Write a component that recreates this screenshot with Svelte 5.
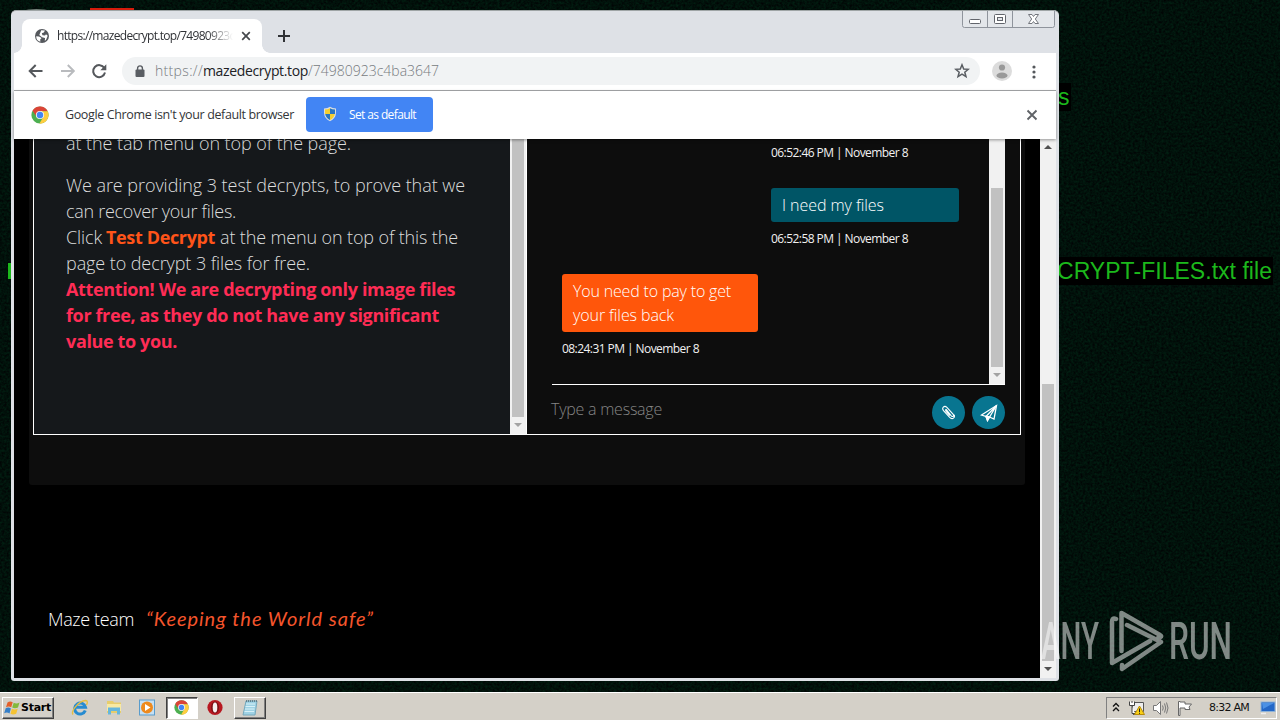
<script>
  const url = { scheme: 'https://', host: 'mazedecrypt.top', path: '/74980923c4ba3647' };

  // Spreads letter spacing so a run of text fills the given width.
  function fit(node, width) {
    const n = node.textContent.length;
    const natural = node.getBoundingClientRect().width;
    node.style.letterSpacing = `${(width - natural) / n}px`;
  }
</script>

{#snippet chromeLogo()}
  <svg viewBox="0 0 18 18" class="chrome-logo">
    <circle cx="9" cy="9" r="8.6" fill="#4caf50" />
    <path d="M1.5 4.8A8.6 8.6 0 0 1 16.7 5.2L9 5.2 5.8 11z" fill="#db4437" />
    <path d="M16.7 5.2A8.6 8.6 0 0 1 8.4 17.6L12.4 11 9 5.2z" fill="#ffcd40" />
    <circle cx="9" cy="9" r="4.1" fill="#f4f4f4" />
    <circle cx="9" cy="9" r="3.2" fill="#4285f4" />
  </svg>
{/snippet}

<div class="desktop">
  <svg class="noise" width="1280" height="720">
    <filter id="grain" x="0" y="0" width="100%" height="100%" color-interpolation-filters="sRGB">
      <feTurbulence type="fractalNoise" baseFrequency="0.42" numOctaves="2" seed="4" />
      <feColorMatrix values="0 0 0 0 0.005  0 .16 0 0 -.012  0 .08 0 0 .002  0 0 0 0 1" />
    </filter>
    <rect width="1280" height="720" filter="url(#grain)" />
  </svg>

  <span class="wall letter-s">s</span>
  <span class="wall file-name"><span use:fit={215}>CRYPT-FILES.txt file</span></span>
  <i class="wall-edge green"></i>
  <i class="wall-edge red"></i>
  <i class="wall-edge grey"></i>

  <div class="window">
    <div class="tabstrip">
      <div class="tab">
        <svg width="16" height="16" viewBox="0 0 16 16">
          <circle cx="8" cy="8" r="7" fill="#55585d" />
          <path d="M2.2 8.2 5 8.6 7.6 10.1 6.2 11.6 6.4 13.8C3.7 13.2 2.1 11 2.2 8.2zM7.2 2.3 11 2.6 9.8 4.6 7.8 5.3 8.5 7.3 11 7.6 12 6.2 13.7 7.7 12.2 11.6 10.8 13 11 10 8 9.2 5.3 6.9z" fill="#fff" />
        </svg>
        <div class="tab-title"><span use:fit={221}>{url.scheme}{url.host}{url.path}</span></div>
        <svg class="tab-x" width="10" height="10" viewBox="0 0 10 10"><path d="M1.2 1.2 8.8 8.8M8.8 1.2 1.2 8.8" stroke="#45484c" stroke-width="1.7" /></svg>
      </div>
      <svg class="plus" width="12" height="12" viewBox="0 0 12 12"><path d="M6 0V12M0 6H12" stroke="#303236" stroke-width="2" /></svg>
      <svg class="controls" width="94" height="18" viewBox="0 0 94 18">
        <path d="M.5 0V14.5Q.5 16.5 2.5 16.5H90.5Q92.5 16.5 92.5 14.5V0M25.5 0V16M50.5 0V16" fill="#e3e6ea" stroke="#8f949c" />
        <rect x="7.5" y="8.5" width="11" height="4" rx="1" fill="#fff" stroke="#62656c" />
        <rect x="32.5" y="3.500" width="11" height="9" rx="1" fill="#fff" stroke="#62656c" />
        <rect x="35.500" y="6.500" width="5" height="3" fill="#e3e6ea" stroke="#62656c" />
        <path d="M66.500 3.500h3.500l1.500 2 1.500-2h3.500l-3.200 4.500 3.200 4.500h-3.500l-1.500-2-1.500 2h-3.500l3.200-4.500z" fill="#fff" stroke="#73767d" />
      </svg>
    </div>

    <div class="toolbar">
      <svg class="nav" width="90" height="20" viewBox="0 0 90 20" fill="none">
        <path d="M15.500 10H3M8.700 4 2.700 10 8.700 16" stroke="#55585c" stroke-width="2" />
        <path d="M34 10H46.500M40.800 4 46.800 10 40.800 16" stroke="#b9bbbe" stroke-width="2" />
        <path d="M77.300 7A6 6 0 1 0 78 11.500" stroke="#55585c" stroke-width="2" />
        <path d="M79.300 3.300V9.300H73.300z" fill="#55585c" />
      </svg>
      <div class="omnibox">
        <svg width="10" height="13" viewBox="0 0 10 13"><rect x=".5" y="4.500" width="9" height="7.500" rx="1" fill="#5a5e63" /><path d="M2.600 5V3.300a2.400 2.400 0 0 1 4.800 0V5" fill="none" stroke="#5a5e63" stroke-width="1.400" /></svg>
        <div class="address"><span class="dim" use:fit={48}>{url.scheme}</span><span use:fit={105}>{url.host}</span><span class="dim" use:fit={131}>{url.path}</span></div>
        <svg class="star" width="16" height="16" viewBox="0 0 16 16"><path d="M8 1.800 9.700 6 14.300 6.300 10.800 9.200 12 13.700 8 11.200 4 13.700 5.200 9.200 1.700 6.300 6.300 6z" fill="none" stroke="#5a5e63" stroke-width="1.500" /></svg>
      </div>
      <svg class="avatar" width="20" height="20" viewBox="0 0 20 20"><circle cx="10" cy="10" r="10" fill="#dcdcdc" /><circle cx="10" cy="6.500" r="3.100" fill="#999" /><ellipse cx="10" cy="14.500" rx="5.500" ry="3" fill="#999" /></svg>
      <svg class="dots" width="4" height="14" viewBox="0 0 4 14" fill="#55585c"><circle cx="2" cy="2" r="1.600" /><circle cx="2" cy="7" r="1.600" /><circle cx="2" cy="12" r="1.600" /></svg>
    </div>

    <div class="infobar">
      {@render chromeLogo()}
      <span class="info-text"><span use:fit={229}>Google Chrome isn't your default browser</span></span>
      <button class="default-btn">
        <svg width="14" height="16" viewBox="0 0 14 16">
          <path d="M7 .7Q4.500 2.500 1 2.500V7Q1.300 12.500 7 15.300 12.700 12.500 13 7V2.500Q9.500 2.500 7 .7z" fill="#d8dde0" />
          <path d="M7 2.200V8H12V3.500Q9 3.400 7 2.200zM7 8H2.200Q3 12 7 14z" fill="#2876c4" />
          <path d="M7 2.200V8H2V3.500Q5 3.400 7 2.200zM7 8H11.800Q11 12 7 14z" fill="#f4cf30" />
        </svg>
        <span use:fit={67}>Set as default</span>
      </button>
      <svg class="info-x" width="12" height="12" viewBox="0 0 12 12"><path d="M1.500 1.500 10.500 10.500M10.500 1.500 1.500 10.500" stroke="#606367" stroke-width="1.900" /></svg>
    </div>

    <div class="viewport">
      <div class="page">
        <main>
          <div class="panel">
            <section class="info">
              <div class="copy">
                <p><span use:fit={285}>at the tab menu on top of the page.</span></p>
                <p>
                  <span use:fit={399}>We are providing 3 test decrypts, to prove that we</span><br />
                  <span use:fit={170}>can recover your files.</span><br />
                  <span use:fit={36}>Click</span><b class="orange" use:fit={109}>Test Decrypt</b><span use:fit={238}>at the menu on top of this the</span><br />
                  <span use:fit={244}>page to decrypt 3 files for free.</span><br />
                  <b class="pink"><span use:fit={389}>Attention! We are decrypting only image files</span><br />
                    <span use:fit={373}>for free, as they do not have any significant</span><br />
                    <span use:fit={111}>value to you.</span></b>
                </p>
              </div>
              <div class="scroll"><i class="thumb"></i><i class="arrow down pale"></i></div>
            </section>
            <section class="chat">
              <div class="log">
                <div class="messages">
                  <div class="mine first"><time><span use:fit={137}>06:52:46 PM | November 8</span></time></div>
                  <div class="mine">
                    <div class="bubble teal"><span use:fit={102}>I need my files</span></div>
                    <time><span use:fit={137}>06:52:58 PM | November 8</span></time>
                  </div>
                  <div class="theirs">
                    <div class="bubble fire"><span use:fit={158}>You need to pay to get</span><br /><span use:fit={101}>your files back</span></div>
                    <time><span use:fit={137}>08:24:31 PM | November 8</span></time>
                  </div>
                </div>
                <div class="scroll"><i class="gap"></i><i class="thumb"></i><i class="arrow down pale"></i></div>
              </div>
              <div class="composer">
                <div class="placeholder"><span use:fit={111}>Type a message</span></div>
                <div class="round">
                  <svg width="15" height="15" viewBox="0 0 16 16" fill="none" stroke="#fff" stroke-width="1.200"><path d="M5.200 4.500 11 11.500Q12.200 12.700 13 12 13.800 11.200 12.800 9.800L6.300 2.500Q4.200.7 2.500 2.200 1 3.800 2.700 6L9 13Q11.300 15.300 13.300 14 15 12.500 14 10.500M5.200 4.500Q4.500 5.500 5.500 6.800L9.500 11.200" /></svg>
                </div>
                <div class="round">
                  <svg width="18" height="18" viewBox="0 0 18 18" fill="none" stroke="#fff" stroke-width="1.300"><path d="M1.500 11 16.500 1.500 14 15 9.500 13 7.500 16.500 6 12.500z" /><path d="M6 12.500 16.500 1.500 9.500 13z" fill="#087590" /><path d="M6 12.500 9.500 13 7.500 16.500z" fill="#fff" /></svg>
                </div>
              </div>
            </section>
          </div>
        </main>
        <footer><span use:fit={86}>Maze team</span><em><span use:fit={228}>“Keeping the World safe”</span></em></footer>
      </div>
      <div class="scroll main-scroll"><i class="arrow up"></i><i class="gap"></i><i class="thumb"></i><i class="arrow down"></i></div>
    </div>
  </div>

  <svg class="watermark" width="200" height="70" viewBox="0 0 200 70">
    <g fill="#fff">
      <text x="2" y="50" textLength="58" lengthAdjust="spacingAndGlyphs">ANY</text>
      <text x="130" y="50" textLength="63" lengthAdjust="spacingAndGlyphs">RUN</text>
    </g>
    <g fill="none" stroke="#fff" stroke-width="4.500" stroke-linejoin="round" stroke-linecap="round">
      <path d="M77 10Q73 8 73 13V54L111 32M82.500 42V4L121 26Q124 28 119 29M88 16 122 33 83 60V56" />
    </g>
  </svg>

  <div class="taskbar">
    <div class="start">
      <svg width="17" height="16" viewBox="0 0 17 16">
        <path d="M3.500 2.500Q6 .7 8.700 2.300L7.200 7.200Q4.700 5.700 2 7.200z" fill="#e4602b" />
        <path d="M9.700 2.700Q12.500 4.200 15.500 2.500L14 7.500Q11 9 8.200 7.600z" fill="#83b93b" />
        <path d="M1.700 8.300Q4.300 6.900 6.900 8.400L5.500 13.400Q3 11.900.2 13.300z" fill="#367fc8" />
        <path d="M7.900 8.700Q10.600 10.200 13.700 8.700L12.200 13.700Q9.200 15.200 6.500 13.800z" fill="#f5c333" />
      </svg>
      <b use:fit={30}>Start</b>
    </div>
    <div class="pins">
      <svg width="18" height="17" viewBox="0 0 18 17"><path d="M14.300 11.500A5.500 5.500 0 1 1 14.500 8.300H5" fill="none" stroke="#278bd0" stroke-width="3" /><path d="M2 15.500C-.5 12 8 2 14.500 1.500 17 1.500 16.500 4 15.500 6" fill="none" stroke="#e5be43" stroke-width="1.400" /></svg>
      <svg width="18" height="17" viewBox="0 0 18 17"><path d="M2 2H8L9 3.500H16V14H2z" fill="#e7cd6c" /><path d="M2 5H16V12H2z" fill="#f8e9a2" /><path d="M3 8.500H15V15.500H12V12H6V15.500H3z" fill="#66b6dc" /></svg>
      <svg width="18" height="17" viewBox="0 0 18 17"><rect x="1.500" y="1" width="15" height="15" fill="#c6e0f3" stroke="#599ccc" /><circle cx="9" cy="8.500" r="6" fill="#ee8a1d" /><path d="M7 5 12.500 8.500 7 12z" fill="#fff" /></svg>
      <div class="task active">{@render chromeLogo()}</div>
      <svg width="16" height="17" viewBox="0 0 16 17"><circle cx="8" cy="8.500" r="7.600" fill="#b81820" /><ellipse cx="8" cy="8.500" rx="4" ry="6" fill="#7d0e14" /><ellipse cx="8" cy="8.500" rx="2.300" ry="5" fill="#f5eded" /></svg>
      <div class="task">
        <svg width="18" height="18" viewBox="0 0 18 18"><path d="M5 2H16L14 16H2z" fill="#9fd2e4" stroke="#76a9bd" /><path d="M5 5H14M4.500 7.500H14M4 10H13.500M3.500 12.500H13" stroke="#d8f1f7" /><path d="M5 2H16" stroke="#566f79" stroke-width="1.500" stroke-dasharray="1 1" /></svg>
      </div>
    </div>
    <div class="tray">
      <svg width="8" height="11" viewBox="0 0 8 11" fill="none" stroke="#111" stroke-width="1.300"><path d="M1 4.500 4 1.500 7 4.500M1 9 4 6 7 9" /></svg>
      <svg class="network" width="17" height="16" viewBox="0 0 17 16"><path d="M4.500 2.500H15.500V11.500H4.500zM5 14.500H13" fill="#eee" stroke="#555" /><path d="M1.500 1.500V5.500H6.500V1.500M4 1V3M4 6V13.500H7" fill="#fff" stroke="#444" /><path d="M11.500 6 16.500 14.500H6.500z" fill="#f8cf16" stroke="#b78b0c" /><path d="M11.500 8.500V12M11.500 12.800V13.800" stroke="#222" /></svg>
      <svg class="speaker" width="17" height="16" viewBox="0 0 17 16" fill="none" stroke="#777"><path d="M1.500 5.500H4.500L8.500 1.500V14.500L4.500 10.500H1.500z" fill="#fff" /><path d="M10.500 5.500Q12 8 10.500 10.500M12.500 3.500Q15 8 12.500 12.500M14.500 2.500Q17.500 8 14.500 13.500" /></svg>
      <svg class="flag" width="16" height="16" viewBox="0 0 16 16"><path d="M1.500 15.500V1.500H3V2H8V4H14.500L12 7 13 9.500H8V8H3V15.500z" fill="#fff" stroke="#666" /></svg>
      <span class="clock"><span use:fit={40}>8:32 AM</span></span>
      <svg class="screen" width="16" height="14" viewBox="0 0 16 14"><rect x="1" y="1" width="14" height="9.500" fill="#2367c7" stroke="#8fb3d8" /><path d="M2 2H14L3 8z" fill="#4b91e5" /><path d="M1 12.500H6" stroke="#eee" stroke-width="1.500" /></svg>
    </div>
  </div>
</div>

<style>
  :global(body) { margin: 0; overflow: hidden; }
  * { box-sizing: border-box; }
  svg { display: block; flex: none; }
  .desktop { position: relative; width: 1280px; height: 720px; overflow: hidden; background: #02110b; font-family: "Open Sans", "Noto Sans", sans-serif; display: flex; flex-direction: column; justify-content: flex-end; }
  span, b, em { white-space: nowrap; }
  .noise { position: absolute; inset: 0; }
  .wall { position: absolute; background: #000; color: #1cb81c; font: 23px/28px "Liberation Sans", sans-serif; }
  .letter-s { left: 1058px; top: 83px; padding-right: 1px; }
  .file-name { left: 1057px; top: 257px; padding-right: 1px; }
  .wall-edge { position: absolute; }
  .green { left: 8px; top: 263px; width: 3px; height: 16px; background: #1cb81c; }
  .red { left: 90px; top: 8px; width: 44px; height: 4px; background: #d51b0b; }
  .grey { left: 25px; top: 9px; width: 23px; height: 3px; background: #74807a; border-radius: 50%; }

  .window { position: absolute; left: 11px; top: 10px; width: 1048px; height: 671px; padding: 1px 3px 3px; background: #dee1e6; border-radius: 5px 5px 3px 3px; border-top: 1px solid #9fa5a6; display: flex; flex-direction: column; overflow: hidden; }
  .window > * { flex: none; }
  .tabstrip { height: 41px; display: flex; align-items: flex-end; }
  .tab { position: relative; width: 240px; height: 34px; margin-left: 8px; padding: 0 0 0 12px; background: #fff; border-radius: 8px 8px 0 0; display: flex; align-items: center; }
  .tab::before, .tab::after { content: ""; position: absolute; bottom: 0; width: 8px; height: 8px; }
  .tab::before { left: -8px; background: radial-gradient(circle at 0 0, transparent 7.500px, #fff 8px); }
  .tab::after { right: -8px; background: radial-gradient(circle at 100% 0, transparent 7.500px, #fff 8px); }
  .tab-title { width: 176px; margin-left: 7px; overflow: hidden; font-size: 12px; line-height: 18px; color: #303236; -webkit-mask-image: linear-gradient(90deg, #000 150px, transparent 176px); mask-image: linear-gradient(90deg, #000 150px, transparent 176px); }
  .tab-x { margin-left: 8px; }
  .plus { margin: 0 0 11px 16px; }
  .controls { align-self: flex-start; margin: -1px 0 0 auto; }
  .toolbar { height: 38px; background: #fff; display: flex; align-items: center; border-bottom: 1px solid #a9abad; }
  .nav { margin: -1px 0 0 13px; }
  .omnibox { width: 858px; height: 28px; margin: -1px 0 0 5px; padding: 0 10px 0 13px; border-radius: 14px; background: #f1f3f4; display: flex; align-items: center; }
  .address { margin-left: 10px; display: flex; font-size: 14px; line-height: 20px; color: #202124; }
  .dim { color: #777b80; font-weight: 300; }
  .star { margin-left: auto; }
  .avatar { margin: -1px 0 0 12px; }
  .dots { margin-left: 20px; }
  .infobar { position: relative; z-index: 1; height: 48px; padding-left: 17px; background: #fff; display: flex; align-items: center; box-shadow: 0 1px 3px #0006; }
  .chrome-logo { width: 18px; height: 18px; }
  .info-text { margin: -1px 0 0 16px; width: 241px; font-size: 12.500px; color: #333538; }
  .default-btn { width: 127px; height: 35px; margin-top: -2px; padding: 0 0 0 17px; border: 0; border-radius: 4px; background: #4285f4; color: #fff; font: 12px "Open Sans", sans-serif; display: flex; align-items: center; gap: 12px; }
  .info-x { margin-left: auto; margin-right: 18px; }

  .viewport { height: 539px; display: flex; background: #000; overflow: hidden; }
  .page { width: 1026px; height: 539px; }
  main { width: 996px; height: 346px; margin-left: 15px; padding-left: 4px; background: #0d0d0d; border-radius: 0 0 3px 3px; }
  .panel { width: 988px; height: 296px; border: 1px solid #fff; border-top: 0; display: flex; }
  .info { width: 493px; display: flex; justify-content: space-between; background: #15181b; border-right: 1px solid #fff; }
  .copy { padding-left: 32px; font-size: 18px; line-height: 26px; font-weight: 300; color: #dcdddd; }
  .copy p { margin: 0 0 16px; }
  .copy p:first-child { margin-top: -9px; }
  .orange { color: #ff5419; margin: 0 5px 0 4px; font-weight: 700; }
  .pink { color: #ff2c55; font-weight: 700; }
  .scroll { width: 16px; flex: none; background: #f1f1f1; display: flex; flex-direction: column; align-items: center; }
  .thumb { width: 12px; flex: 1; background: #c1c1c1; }
  .arrow { position: relative; width: 16px; height: 17px; flex: none; }
  .arrow::after { content: ""; position: absolute; left: 4px; top: 6px; border: 4px solid transparent; }
  .down::after { border-top-color: #505050; border-bottom: 0; }
  .up::after { border-bottom-color: #505050; border-top: 0; }
  .pale::after { border-top-color: #a3a3a3; }
  .chat { flex: 1; padding: 0 15px 0 25px; display: flex; flex-direction: column; }
  .log { height: 246px; border-bottom: 1px solid #fff; display: flex; justify-content: space-between; margin-right: 0; }
  .log .gap { height: 49px; }
  .messages { flex: 1; padding-left: 10px; display: flex; flex-direction: column; align-items: flex-start; }
  time { display: block; font-size: 12px; line-height: 16px; color: #f2f2f2; }
  .mine { margin-left: 209px; margin-bottom: 27px; }
  .first { padding-top: 6px; }
  .bubble { border-radius: 3px; padding: 5px 11px; font-size: 16px; line-height: 24px; color: #fff; font-weight: 300; margin-bottom: 9px; }
  .teal { width: 188px; height: 34px; background: #005566; }
  .fire { width: 196px; height: 58px; background: #ff560b; }
  .composer { flex: 1; display: flex; align-items: center; gap: 7px; padding-top: 6px; }
  .placeholder { flex: 1; font-size: 16px; font-weight: 300; line-height: 24px; margin: -7px 0 0 -1px; color: #858585; }
  .round { width: 33px; height: 33px; border-radius: 50%; background: #087590; display: flex; align-items: center; justify-content: center; }
  footer { margin: 119px 0 0 34px; display: flex; align-items: baseline; gap: 12px; font: 300 18px/28px "Open Sans", sans-serif; color: #fff; }
  em { color: #f5552c; font: italic 20px/28px Lato, sans-serif; }
  .main-scroll .gap { height: 228px; }

  .watermark { position: absolute; left: 1039px; top: 609px; opacity: .5; overflow: visible; font: 500 52px Roboto, sans-serif; }

  .taskbar { position: relative; height: 28px; padding: 3px 2px 1px; border-top: 1px solid #fff; background: #d4d0c8; display: flex; align-items: center; font-family: "DejaVu Sans", sans-serif; }
  .start { width: 52px; height: 22px; display: flex; align-items: center; gap: 0; border: 1px solid; border-color: #fff #404040 #404040 #fff; box-shadow: inset -1px -1px #808080; font-size: 11px; padding-left: 1px; color: #000; }
  .pins { margin-left: 17px; display: flex; align-items: center; gap: 15.500px; }
  .pins > .task { width: 32px; height: 22px; display: flex; align-items: center; justify-content: center; border: 1px solid; border-color: #fff #404040 #404040 #fff; box-shadow: inset -1px -1px #808080; }
  .pins > .active { background: #fff; border-color: #404040 #fff #fff #404040; box-shadow: inset 1px 1px #808080; margin: 0 -6px; }
  .active .chrome-logo { width: 15px; height: 15px; }
  .pins > .task:last-child { margin-left: -5px; }
  .tray { margin-left: auto; margin-right: 1px; width: 171px; height: 22px; padding: 0 0 0 5px; border: 1px solid; border-color: #808080 #fff #fff #808080; display: flex; align-items: center; }
  .network { margin-left: 8px; }
  .speaker { margin-left: 7px; }
  .flag { margin-left: 8px; }
  .clock { margin-left: 16px; width: 40px; font-size: 11px; color: #111; }
  .screen { margin-left: 11px; }
</style>
